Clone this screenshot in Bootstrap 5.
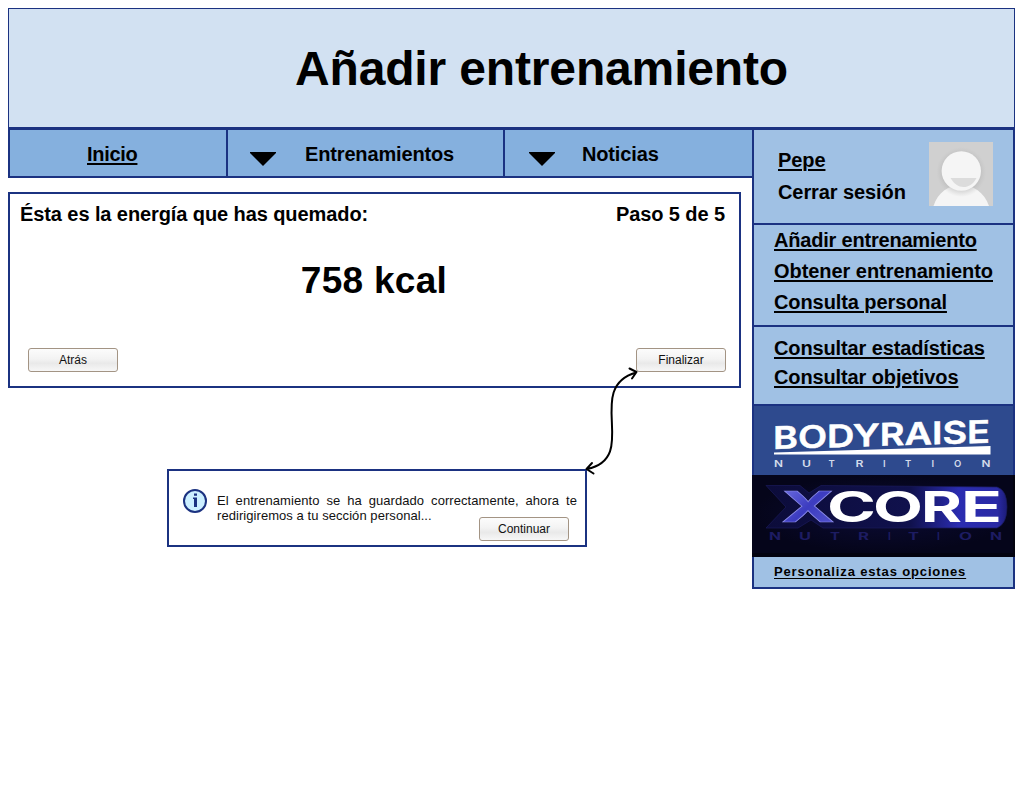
<!DOCTYPE html>
<html lang="es">
<head>
<meta charset="utf-8">
<meta name="viewport" content="width=device-width, initial-scale=1">
<title>Añadir entrenamiento</title>
<link rel="stylesheet" href="https://cdn.jsdelivr.net/npm/bootstrap@5.3.0/dist/css/bootstrap.min.css">
<style>
  :root { --line: #1b3281; }
  body { font-family: "Liberation Sans", Arial, sans-serif; color: #000; background: #fff; font-size: 20px; line-height: 24px; font-weight: 700; letter-spacing: -.09px; }
  a, a:hover { color: #000; }
  .page { width: 1007px; margin: 8px 0 0 8px; }
  .masthead { height: 120px; background: #d2e1f2; border: 1px solid var(--line); padding: 2px 0 0 60px; }
  .masthead h1 { font-size: 48px; line-height: 58px; font-weight: 700; white-space: nowrap; letter-spacing: -.15px; }
  .links a { text-decoration-thickness: 2px; text-underline-offset: 2px; }
  .main-col { width: 744px; }
  .menu-bar { height: 50px; border: 2px solid var(--line); border-right: 0; background: #85b0de; letter-spacing: -.15px; }
  .menu-cell { padding-top: 12px; }
  .menu-cell + .menu-cell { border-left: 2px solid var(--line); }
  .cell-a { width: 216px; padding-left: 77px; letter-spacing: -.3px; }
  .cell-b { width: 277px; padding-left: 22px; gap: 29px; }
  .cell-c { padding-left: 24px; gap: 27px; }
  .menu-cell svg { margin-top: 10px; }
  .step-panel { width: 733px; height: 196px; margin-top: 14px; border: 2px solid var(--line); padding: 8px 14px 0 10px; }
  .kcal { font-size: 37px; line-height: 44px; margin: 33px 0 0 3px; height: 79px; letter-spacing: .28px; }
  .btn-soft { width: 90px; height: 24px; padding: 0; border: 1px solid #a39484; border-radius: 3px; font-size: 12px; line-height: 22px; color: #111; letter-spacing: 0; background: linear-gradient(#fcfcfc, #f3f3f3 45%, #e9e9e9 65%, #f7f7f7); }
  .actions { margin: 10px -1px 0 8px; }
  .side { width: 263px; border: 2px solid var(--line); background: #a0c1e4; }
  .side-block { border-bottom: 2px solid var(--line); padding-left: 20px; white-space: nowrap; }
  .user { height: 95px; padding: 12px 20px 0 24px; }
  .user .names { padding-top: 6px; gap: 8px; }
  .b-train { height: 102px; padding-top: 3px; gap: 7px; }
  .b-train a:first-child { letter-spacing: -.2px; }
  .b-train a:nth-child(2) { letter-spacing: -.05px; }
  .b-train a, .b-stats a { align-self: flex-start; }
  .b-stats { height: 79px; padding-top: 9px; gap: 5px; letter-spacing: -.12px; }
  .logo { display: block; letter-spacing: 0; }
  .xcore { margin: 0 -2px; }
  .custom { height: 30px; padding: 4px 0 0 20px; font-size: 13px; line-height: 22px; }
  .custom a { text-decoration-thickness: 1px; text-underline-offset: 2px; letter-spacing: .86px; }
  .notice { width: 420px; height: 78px; margin: 81px 0 0 159px; border: 2px solid var(--line); padding: 18px 8px 0 14px; gap: 10px; }
  .notice p { font-size: 13px; line-height: 15px; font-weight: 400; text-align: justify; padding-top: 4px; height: 28px; margin: 0; letter-spacing: .06px; color: #111; }
  .notice .btn-soft { margin-right: 8px; }
  .link-arrow { left: 580px; top: 360px; }
</style>
</head>
<body>
<div class="page">
  <header class="masthead d-flex align-items-center justify-content-center"><h1 class="m-0">Añadir entrenamiento</h1></header>
  <div class="d-flex align-items-start">
    <div class="main-col">
      <nav class="menu-bar d-flex links">
        <div class="menu-cell cell-a"><a href="#">Inicio</a></div>
        <div class="menu-cell cell-b d-flex align-items-start">
          <svg width="26" height="14" viewBox="0 0 26 14"><path d="M0 0H26V1L13 14L0 1Z"/></svg><span>Entrenamientos</span>
        </div>
        <div class="menu-cell cell-c d-flex align-items-start flex-fill">
          <svg width="26" height="14" viewBox="0 0 26 14"><path d="M0 0H26V1L13 14L0 1Z"/></svg><span>Noticias</span>
        </div>
      </nav>
      <main class="step-panel">
        <div class="d-flex justify-content-between"><span>Ésta es la energía que has quemado:</span><span>Paso 5 de 5</span></div>
        <div class="kcal text-center">758 kcal</div>
        <div class="actions d-flex justify-content-between"><button class="btn btn-soft">Atrás</button><button class="btn btn-soft">Finalizar</button></div>
      </main>
      <section class="notice d-flex">
        <svg class="flex-shrink-0" width="24" height="24" viewBox="0 0 24 24"><circle cx="12" cy="12" r="11" fill="#ccefff" stroke="#1b3281" stroke-width="2"/><path fill="#1b3281" d="M11 4.500h3v2.200h-3zM10 8.500h4v9.500h-3v-8h-1z"/></svg>
        <div class="d-flex flex-column flex-fill align-items-end">
          <p>El entrenamiento se ha guardado correctamente, ahora te redirigiremos a tu sección personal...</p>
          <button class="btn btn-soft">Continuar</button>
        </div>
      </section>
    </div>
    <aside class="side links">
      <div class="side-block user d-flex justify-content-between">
        <div class="names d-flex flex-column align-items-start"><a href="#">Pepe</a><span>Cerrar sesión</span></div>
        <svg width="64" height="64" viewBox="0 0 64 64">
          <defs><radialGradient id="halo"><stop offset=".75" stop-color="#aaa" stop-opacity=".4"/><stop offset="1" stop-color="#bbb" stop-opacity="0"/></radialGradient></defs>
          <rect width="64" height="64" fill="#d0d0d0"/>
          <path fill="#f5f5f5" d="M4.500 64C9 50 20 43 32 43s23 7 28 21z"/>
          <circle cx="32.300" cy="30" r="25" fill="url(#halo)"/>
          <circle cx="32.300" cy="29" r="19.700" fill="#f5f5f5"/>
          <path fill="#dcdcdc" d="M21.500 36H47.500C44 42.500 39.500 45 34.500 45S25 42 21.500 36z"/>
        </svg>
      </div>
      <div class="side-block b-train d-flex flex-column"><a href="#">Añadir entrenamiento</a><a href="#">Obtener entrenamiento</a><a href="#">Consulta personal</a></div>
      <div class="side-block b-stats d-flex flex-column"><a href="#">Consultar estadísticas</a><a href="#">Consultar objetivos</a></div>
      <svg class="logo" width="259" height="69" viewBox="754 406 259 69" font-family="Inter, sans-serif" fill="#fff">
        <rect x="754" y="406" width="259" height="69" fill="#2e4a8e"/>
        <text transform="translate(773 449) skewY(-1.700)" font-size="31" font-weight="600" stroke="#fff" stroke-width=".5" textLength="217" lengthAdjust="spacingAndGlyphs">BODYRAISE</text>
        <path d="M774 452.500L990.500 446v8.500H774z"/>
        <g font-size="9.500" font-weight="600" fill="#d3dbea"><text x="774" y="467" textLength="9" lengthAdjust="spacingAndGlyphs">N</text><text x="802" y="467" textLength="9" lengthAdjust="spacingAndGlyphs">U</text><text x="828.500" y="467">T</text><text x="855.500" y="467" textLength="8" lengthAdjust="spacingAndGlyphs">R</text><text x="883" y="467">I</text><text x="905" y="467">T</text><text x="931.500" y="467">I</text><text x="954" y="467">O</text><text x="981.500" y="467" textLength="9" lengthAdjust="spacingAndGlyphs">N</text></g>
      </svg>
      <svg class="logo xcore" width="263" height="82" viewBox="752 475 263 82" font-family="Inter, sans-serif">
        <defs>
          <radialGradient id="night"><stop stop-color="#0b0b35"/><stop offset="1" stop-color="#05051a"/></radialGradient>
          <linearGradient id="plate"><stop stop-color="#0c0c3a"/><stop offset=".6" stop-color="#10114d"/><stop offset=".8" stop-color="#2a2cb0"/><stop offset=".96" stop-color="#2a2aa4"/><stop offset="1" stop-color="#1c1c78"/></linearGradient>
          <linearGradient id="steel" x1="0" y1="0" x2="1" y2="1"><stop stop-color="#7777e6"/><stop offset=".5" stop-color="#3c3cc0"/><stop offset="1" stop-color="#5858d0"/></linearGradient>
        </defs>
        <rect x="752" y="475" width="263" height="82" fill="#03030f"/>
        <rect x="752" y="475" width="261" height="78" fill="url(#night)"/>
        <path fill="url(#plate)" stroke="#1a1a5a" stroke-width=".7" d="M766 485.500H800L809 493 821 485.500 997 487Q1007 490 1007 507T997 528H823L811 520 798 528H766L786 507Z"/>
        <g font-size="42" font-weight="700">
          <text x="781" y="522" textLength="54" lengthAdjust="spacingAndGlyphs" fill="url(#steel)" stroke="#8c8ce8" stroke-width=".6">X</text>
          <g fill="#fff">
            <text x="827" y="522" textLength="49" lengthAdjust="spacingAndGlyphs">C</text>
            <text x="873" y="522" textLength="50" lengthAdjust="spacingAndGlyphs">O</text>
            <text x="921" y="522" textLength="41" lengthAdjust="spacingAndGlyphs">R</text>
            <text x="961" y="522" textLength="41" lengthAdjust="spacingAndGlyphs">E</text>
          </g>
        </g>
        <g font-size="10" fill="#1d1c62"><text x="769" y="540" textLength="12" lengthAdjust="spacingAndGlyphs">N</text><text x="799" y="540" textLength="12" lengthAdjust="spacingAndGlyphs">U</text><text x="830" y="540" textLength="10" lengthAdjust="spacingAndGlyphs">T</text><text x="858" y="540" textLength="11" lengthAdjust="spacingAndGlyphs">R</text><text x="888" y="540">I</text><text x="908" y="540" textLength="11" lengthAdjust="spacingAndGlyphs">T</text><text x="937" y="540">I</text><text x="959" y="540" textLength="13" lengthAdjust="spacingAndGlyphs">O</text><text x="990" y="540" textLength="12" lengthAdjust="spacingAndGlyphs">N</text></g>
      </svg>
      <div class="custom"><a href="#">Personaliza estas opciones</a></div>
    </aside>
  </div>
</div>
<svg class="link-arrow position-absolute" width="64" height="120" viewBox="580 360 64 120" fill="none" stroke="#000" stroke-width="2" stroke-linecap="round" stroke-linejoin="round"><path d="M587 469C641 458 583 388 636 372.500M629.500 368.500L636.500 372 632 378.500M592 463L586.500 469 593.500 473.500"/></svg>
<script src="https://cdn.jsdelivr.net/npm/bootstrap@5.3.0/dist/js/bootstrap.bundle.min.js"></script>
</body>
</html>
